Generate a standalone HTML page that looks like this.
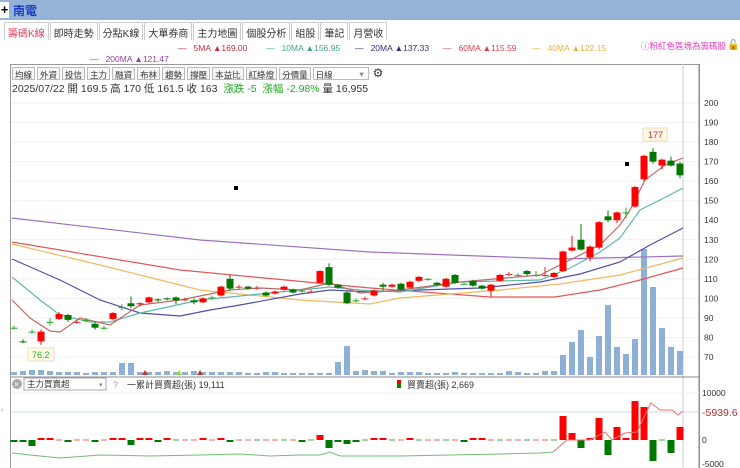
<!DOCTYPE html>
<html><head><meta charset="utf-8">
<style>
*{margin:0;padding:0;box-sizing:border-box}
body{width:740px;height:468px;overflow:hidden;background:#fff;font-family:"Liberation Sans","Noto Sans CJK TC",sans-serif;position:relative}
.top{position:absolute;left:0;top:0;width:740px;height:20px;background:#95b3d7}
.plus{position:absolute;left:0;top:2px;width:9px;height:16px;background:#fff;font-size:13px;line-height:15px;font-weight:bold;text-align:center}
.title{position:absolute;left:13px;top:2px;font-size:12px;color:#1a3fbf;font-weight:bold}
.tabs{position:absolute;left:4px;top:22px;height:18px;display:flex}
.tabs span{font-size:10px;color:#333;border:1px solid #ccc;border-bottom:none;padding:2px 3px;height:18px;background:#fff;margin-right:1px}
.tabs span.a{color:#e04060}
.leg{position:absolute;font-size:8.5px;white-space:nowrap}
.box{position:absolute;left:10px;top:64px;width:690px;height:404px;border:1px solid #999;border-bottom:none}
.tb{position:absolute;left:12px;top:67px;display:flex}
.tb span{font-size:8.5px;border:1px solid #bbb;padding:1px 2px;margin-right:2px;color:#333;height:13px;background:#f7f7f7}
.info{position:absolute;left:12px;top:81px;font-size:10.5px;color:#333;white-space:nowrap}
</style></head><body>
<div class="top"><div class="plus">+</div><div class="title">南電</div></div>
<div class="tabs"><span class="a">籌碼K線</span><span>即時走勢</span><span>分點K線</span><span>大單券商</span><span>主力地圖</span><span>個股分析</span><span>組股</span><span>筆記</span><span>月營收</span></div>
<div class="leg" style="left:178px;top:43px;color:#c03040">—&nbsp;&nbsp;&nbsp;5MA ▲169.00</div>
<div class="leg" style="left:266px;top:43px;color:#40a090">—&nbsp;&nbsp;&nbsp;10MA ▲156.95</div>
<div class="leg" style="left:355px;top:43px;color:#303080">—&nbsp;&nbsp;&nbsp;20MA ▲137.33</div>
<div class="leg" style="left:443px;top:43px;color:#e04050">—&nbsp;&nbsp;&nbsp;60MA ▲115.59</div>
<div class="leg" style="left:532px;top:43px;color:#e8b040">—&nbsp;&nbsp;&nbsp;40MA ▲122.15</div>
<div class="leg" style="left:641px;top:40px;color:#e040c0">ⓘ粉紅色區塊為籌碼股</div>
<div class="leg" style="left:727px;top:40px;color:#000;font-size:10px">🔓</div>
<div class="leg" style="left:90px;top:54px;color:#9040a0">—&nbsp;&nbsp;&nbsp;200MA ▲121.47</div>
<div class="box"></div>
<div class="tb"><span>均線</span><span>外資</span><span>投信</span><span>主力</span><span>融資</span><span>布林</span><span>趨勢</span><span>撐壓</span><span>本益比</span><span>紅綠燈</span><span>分價量</span><span style="width:56px;background:#fff">日線<span style="border:none;float:right;color:#888;padding:0;background:none">▾</span></span><span style="border:none;background:none;font-size:12px;line-height:10px">⚙</span></div>
<div class="info">2025/07/22 開 169.5 高 170 低 161.5 收 163 &nbsp;<span style="color:#2a2">漲跌 -5 &nbsp;漲幅 -2.98%</span> 量 16,955</div>
<svg id="s" style="position:absolute;left:0;top:0" width="740" height="468"></svg>
<script>
var s=document.getElementById('s'),h='';
function Y(p){return 103+(200-p)*1.954}
// grid + axis
for(var p=70;p<=200;p+=10){var y=Y(p);h+='<line x1="11" x2="699" y1="'+y+'" y2="'+y+'" stroke="#f0f0f0"/><text x="704" y="'+(y+3)+'" font-size="8.5" fill="#333">'+p+'</text>';}
h+='<line x1="699" x2="699" y1="64" y2="468" stroke="#888"/><line x1="683" x2="683" y1="64" y2="468" stroke="#ccc"/>';
h+='<line x1="11" x2="699" y1="377" y2="377" stroke="#888"/>';
// volumes
var vL=[372,371,370,370,371,372,372,372,373,372,372,372,363,363,372,372,372,371,372,372,371,372,372,372,372,372,373,373,372,372,373,373,373,373,373,373,362,346,371,370,371,371,373,372,372,372,373,373,373,372,373,373,373,373,373,371,372,373,373,371,371,355,342,330,357,336,305,347,354,339,249,287,328,347,351];
for(var i=0;i<75;i++){var x=14+9*i;h+='<rect x="'+(x-3)+'" y="'+vL[i]+'" width="6" height="'+(375-vL[i])+'" fill="#8fb0d6"/>';}
// MAs
function pl(c,pts){h+='<polyline fill="none" stroke="'+c+'" stroke-width="1.2" points="'+pts+'"/>'}
pl('#a070c0','12,218 200,240 370,252 560,259 683,256');
pl('#e05858','12,242 180,270 370,288 490,297 555,297 600,290 640,280 683,268');
pl('#f0b860','12,244 100,265 200,290 300,300 370,304 400,298 500,290 560,284 620,275 683,258');
pl('#5050a8','12,259 60,280 100,300 140,313 180,316 210,310 240,305 300,294 330,290 370,292 420,290 480,288 540,282 580,274 620,262 650,245 683,228');
pl('#60b8a8','12,277 40,300 60,315 90,322 110,322 140,313 200,300 260,294 300,290 330,287 360,290 400,292 460,282 540,280 570,268 600,252 620,238 640,210 660,200 683,188');
pl('#c06868','12,300 30,318 50,331 60,332 80,318 110,325 140,305 180,300 230,290 260,288 300,290 330,283 360,293 400,290 460,282 540,275 570,260 600,245 620,225 630,210 645,180 665,165 683,158');
// candles [o,c,h,l]
var C=[[85,85,86,84],[78,77.5,79,77],[83,83,84,82],[78,83,84,76.2],[88,88,90,86],[89.5,92,93,89],[91.5,89,92,88],[88,88,89,87],[89,89,90,88],[87,85,88,84],[85,85,86,84],[89.5,92.5,93,89],[95.5,95.5,97,94],[97.5,96,101,95],[97,97.5,98,96],[98,100.5,101,97.5],[99.5,99,100,98],[100,99.5,100.5,99],[100.5,99,101,97],[99.5,99.5,100.5,98.5],[99,98,100,97],[98,100,100.5,97.5],[100.5,100.5,101.5,99.5],[101.5,106,106.5,101],[110,105,112,104],[106,106,107,105],[106,105,106.5,104.5],[105.5,105.5,106.5,104.5],[103,101.5,103.5,101],[102.5,103.5,104,102],[104.5,106,106.5,104],[104.5,103,105,102.5],[104,104,105,103],[103.5,103.5,104.5,102.5],[108,114,114.5,107.5],[116,107,118,106.5],[107,105.5,107.5,105],[103,97.5,103.5,97],[99,99,100,98],[100,100,101,99],[101.5,104,104.5,101],[107,106,108,104],[106,107,107.5,105.5],[107.5,104.5,108,104],[105.5,108.5,109,105],[109,111,111.5,108.5],[110,110,110.5,109],[108,107,108.5,106.5],[106,110,110.5,105.5],[112,108,112.5,107.5],[107.5,107.5,108,107],[109,106.5,109.5,106],[106.5,105,107,104.5],[104,107,107.5,101],[109,112,112.5,108.5],[112.5,112.5,113.5,111.5],[112,112,113,111],[114,112.5,114.5,111.5],[112,112,114,111],[112,112,116,111],[111,113,113.5,110.5],[114,124,124.5,113.5],[124.5,126,132,124],[130,125,138,124.5],[121,126.5,127,119],[126,139,139.5,125],[142,140,145,139],[140,144,144.5,138.5],[144,144,146.5,141],[147,157,157.5,146.5],[161,173,173.5,160],[175,170,177,169],[168,171,171.5,166],[170.5,168,172.5,167.5],[169,163,170,161.5]];
for(var i=0;i<C.length;i++){var c=C[i],x=14+9*i,up=c[1]>c[0],dj=Math.abs(c[1]-c[0])<0.3,col=dj?(i%2?'#d33':'#2a2'):(up?'#f00':'#070');
h+='<line x1="'+x+'" x2="'+x+'" y1="'+Y(c[2])+'" y2="'+Y(c[3])+'" stroke="'+col+'"/>';
var t=Y(Math.max(c[0],c[1])),b=Y(Math.min(c[0],c[1]));h+='<rect x="'+(x-3.5)+'" y="'+t+'" width="7" height="'+Math.max(1,b-t)+'" fill="'+col+'"/>';}
h+='<rect x="234" y="186" width="4" height="4" fill="#000"/><rect x="625" y="162" width="4" height="4" fill="#000"/>';
h+='<rect x="643" y="128" width="24" height="13" fill="#fff8e8" stroke="#f0d8b0"/><text x="648" y="138" font-size="9" fill="#d03030">177</text>';
h+='<rect x="28" y="348" width="26" height="13" fill="#fffbe8" stroke="#e8e0c0"/><text x="32" y="358" font-size="9" fill="#3a3">76.2</text>';
h+='<path d="M142 375l3-5 3 5zM197 375l3-5 3 5z" fill="#c33"/><path d="M176 375l3-5 3 5z" fill="#9d4"/>';
// lower panel
h+='<circle cx="17" cy="384" r="5" fill="#aaa"/><text x="14" y="387" font-size="8" fill="#fff">×</text><rect x="24" y="378" width="82" height="12" fill="#fff" stroke="#aaa"/><text x="27" y="387" font-size="8.5" fill="#333">主力買賣超</text><text x="99" y="387" font-size="7" fill="#888">▾</text><text x="113" y="388" font-size="9" fill="#999">?</text>';
h+='<text x="127" y="388" font-size="9" fill="#333">一累計買賣超(張) 19,111</text><rect x="397" y="380" width="4" height="4" fill="#e00"/><rect x="397" y="384" width="4" height="4" fill="#080"/><text x="407" y="388" font-size="9" fill="#333">買賣超(張) 2,669</text>';
h+='<line x1="11" x2="699" y1="412" y2="412" stroke="#c8dcea"/><line x1="11" x2="699" y1="393" y2="393" stroke="#f2f2f2"/>';
h+='<text x="702" y="396" font-size="8.5" fill="#333">10000</text><text x="702" y="416" font-size="10.5" fill="#b03030">-5939.6</text><text x="702" y="443" font-size="8.5" fill="#333">0</text><text x="702" y="467" font-size="8.5" fill="#333">-5000</text>';
var B=[-1,-1,-6,1,2,0,-1,0,0,-1,0,2,2,-5,1,2,-1,1,0,0,0,1,0,2,-1,0,0,0,0,0,0,0,-1,0,5,-8,-1,-4,-1,0,2,1,0,0,1,0,0,0,0,0,-1,1,1,0,0,0,0,0,0,0,0,24,7,-8,1,22,-15,13,1,39,33,-21,0,-13,13];
for(var i=0;i<B.length;i++){var x=14+9*i,v=B[i];if(v==0){h+='<rect x="'+(x-3)+'" y="439.5" width="6" height="1" fill="'+(i%3?'#e66':'#4a4')+'"/>';continue}
var col=v>0?'#f00':'#070',t=v>0?440-v:440,hh=Math.max(2,Math.abs(v));h+='<rect x="'+(x-3.5)+'" y="'+(v>0?440-hh:440)+'" width="7" height="'+hh+'" fill="'+col+'"/>';}
h+='<polyline fill="none" stroke="#70c070" points="12,453 30,455 60,458 100,455 150,456 200,455 240,454 270,456 300,455 320,455 330,452 340,456 370,456 400,456 450,455 500,454 540,453 553,452"/>';
h+='<polyline fill="none" stroke="#e87070" points="553,452 567,440 590,440 605,432 612,440 625,433 637,432 645,415 651,403 660,410 672,410 678,415 683,411"/>';
h+='<text x="1" y="412" font-size="7" fill="#888">‹</text>';
s.innerHTML=h;
</script>
</body></html>
